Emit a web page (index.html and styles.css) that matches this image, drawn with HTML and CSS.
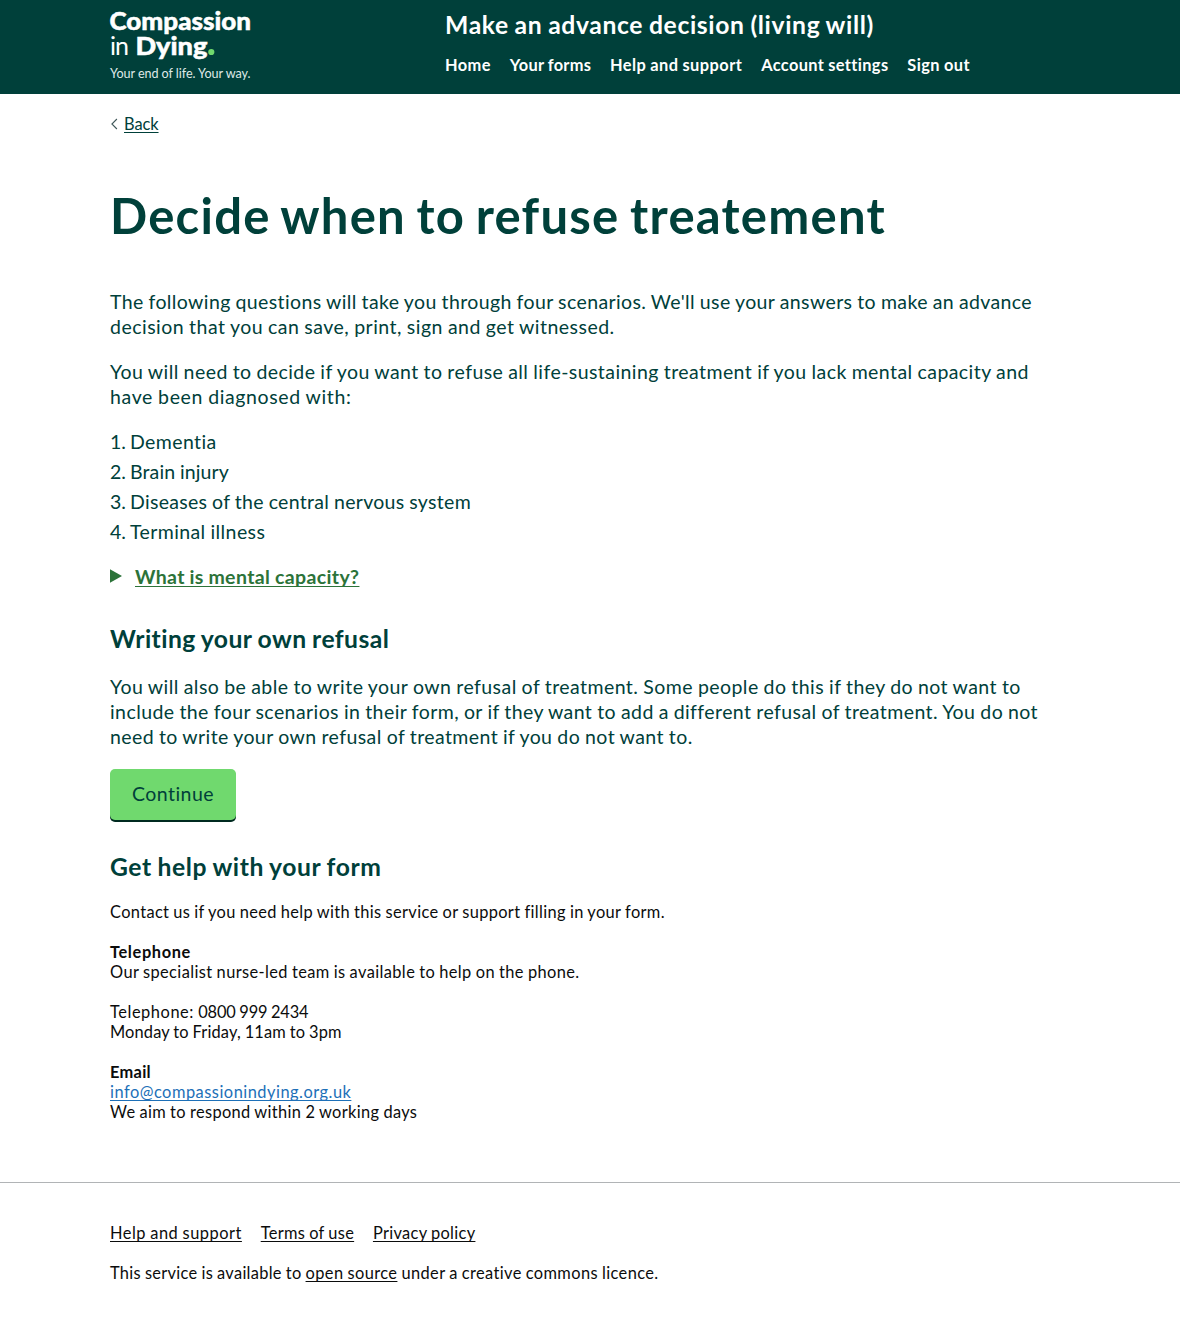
FILE: index.html
```html
<!DOCTYPE html>
<html lang="en">
<head>
<meta charset="utf-8">
<title>Decide when to refuse treatement</title>
<link rel="stylesheet" href="styles.css">
</head>
<body>
<header class="header">
  <div class="container header-inner">
    <a class="logo" href="#">
      <svg width="142" height="80" viewBox="0 0 142 80">
        <text class="logo-heavy" x="-0.5" y="29.5" textLength="141.5" lengthAdjust="spacingAndGlyphs">Compassion</text>
        <text class="logo-light" x="0" y="55" textLength="19">in</text>
        <text class="logo-heavy" x="25.5" y="55" textLength="72" lengthAdjust="spacingAndGlyphs">Dying</text>
        <circle class="logo-dot" cx="101.3" cy="52" r="3.1"/>
        <text class="logo-tag" x="0" y="77.5" textLength="140.5">Your end of life. Your way.</text>
      </svg>
    </a>
    <div class="header-content">
      <div class="service-name">Make an advance decision (living will)</div>
      <nav class="nav">
        <a class="w1" href="#">Home</a>
        <a class="w2" href="#">Your forms</a>
        <a class="w3" href="#">Help and support</a>
        <a class="w4" href="#">Account settings</a>
        <a class="w5" href="#">Sign out</a>
      </nav>
    </div>
  </div>
</header>
<div class="container">
  <div class="back">
    <svg width="8" height="12" viewBox="0 0 8 12"><path d="M6.9 1 1.9 6l5 5" fill="none" stroke="#40585a" stroke-width="1.1"/></svg>
    <a href="#">Back</a>
  </div>
  <main class="main">
    <h1>Decide when to refuse treatement</h1>
    <p><span class="l1">The following questions will take you through four scenarios. We'll use your answers to make an advance</span><br>
    <span class="l2">decision that you can save, print, sign and get witnessed.</span></p>
    <p><span class="l3">You will need to decide if you want to refuse all life-sustaining treatment if you lack mental capacity and</span><br>
    <span class="l4">have been diagnosed with:</span></p>
    <ol class="list">
      <li>Dementia</li>
      <li class="i2">Brain injury</li>
      <li class="i3">Diseases of the central nervous system</li>
      <li>Terminal illness</li>
    </ol>
    <details class="details">
      <summary>
        <svg width="12" height="14" viewBox="0 0 12 14"><path d="M0 0.3 12 7 0 13.7z" fill="#2c7339"/></svg>
        <span>What is mental capacity?</span>
      </summary>
      <p>Mental capacity is the ability to make a decision for yourself.</p>
    </details>
    <h2 class="h-writing">Writing your own refusal</h2>
    <p><span class="l5">You will also be able to write your own refusal of treatment. Some people do this if they do not want to</span><br>
    <span class="l6">include the four scenarios in their form, or if they want to add a different refusal of treatment. You do not</span><br>
    <span class="l7">need to write your own refusal of treatment if you do not want to.</span></p>
    <button class="button" type="button">Continue</button>
  </main>
  <section class="help">
    <h2>Get help with your form</h2>
    <p class="c1">Contact us if you need help with this service or support filling in your form.</p>
    <p><b>Telephone</b><br><span class="c2">Our specialist nurse-led team is available to help on the phone.</span></p>
    <p><span class="c3">Telephone: </span><span class="number">0800 999 2434</span><br><span class="c4">Monday to Friday, 11am to 3pm</span></p>
    <p><b class="c5">Email</b><br><a class="email" href="#">info@compassionindying.org.uk</a><br><span class="c1">We aim to respond within 2 working days</span></p>
  </section>
</div>
<footer class="footer">
  <div class="container">
    <div class="footer-links">
      <a class="f1" href="#">Help and support</a>
      <a href="#">Terms of use</a>
      <a href="#">Privacy policy</a>
    </div>
    <p><span class="f2">This service is available to </span><a class="f3" href="#">open source</a> under a creative commons licence.</p>
  </div>
</footer>
</body>
</html>
```
FILE: styles.css
```css
* { box-sizing: border-box; }

body {
  margin: 0;
  background: #fff;
  color: #0b0c0c;
  font-family: Lato, "Open Sans", sans-serif;
  font-size: 16.4px;
  line-height: 20px;
  word-spacing: -0.5px;
  font-variant-ligatures: none;
}

a {
  color: inherit;
  text-decoration-thickness: 1px;
  text-underline-offset: 2px;
  text-decoration-skip-ink: none;
}

p, h1, h2 { margin: 0; white-space: nowrap; }

.container { width: 960px; margin: 0 auto; }

.header { height: 94px; background: #00403a; color: #fff; }
.header-inner { display: flex; }
.logo { width: 335px; height: 80px; word-spacing: 0; }
.logo svg { display: block; overflow: visible; }
.logo text { fill: #fff; }
.logo .logo-heavy { font-size: 25.5px; font-weight: 900; stroke: #fff; stroke-width: 0.5px; }
.logo .logo-light { font-size: 25px; font-weight: 400; }
.logo .logo-tag { font-size: 12.6px; fill: #dfe9e7; }
.logo-dot { fill: #70d96e; }
.header-content { padding-top: 10px; }
.service-name { font-size: 24.7px; line-height: 30px; font-weight: 700; letter-spacing: 0.63px; word-spacing: -0.8px; }
.nav { display: flex; gap: 18.8px; margin-top: 15px; font-weight: 700; }
.nav a { text-decoration: none; white-space: nowrap; }
.w1 { letter-spacing: 0.4px; }
.w2 { letter-spacing: 0.27px; }
.w3 { letter-spacing: 0.46px; }
.w4 { letter-spacing: 0.37px; }
.w5 { letter-spacing: 0.44px; }

.back { display: flex; align-items: center; gap: 6px; padding-top: 20px; color: #00403a; }
.back a { letter-spacing: -0.06px; }

.main { padding-top: 56px; color: #00403a; font-size: 19.5px; line-height: 25px; }
h1 { font-size: 49px; line-height: 50px; letter-spacing: 1.25px; word-spacing: -2.6px; margin-bottom: 49px; }
.main p { margin-bottom: 20px; }
h2 { font-size: 24.7px; line-height: 30px; color: #00403a; word-spacing: -0.8px; }
.l1 { letter-spacing: 0.38px; }
.l2 { letter-spacing: 0.48px; }
.l3 { letter-spacing: 0.43px; }
.l4 { letter-spacing: 0.63px; }
.l5 { letter-spacing: 0.44px; }
.l6 { letter-spacing: 0.42px; }
.l7 { letter-spacing: 0.42px; }

.list { margin: 0 0 20px; padding-left: 20px; letter-spacing: 0.4px; }
.list li { margin-bottom: 5px; }
.list li:last-child { margin-bottom: 0; }
.list .i2 { letter-spacing: 0.14px; }
.list .i3 { letter-spacing: 0.3px; }
.list { list-style: none; counter-reset: item; }
.list li { display: flex; counter-increment: item; }
.list li::before { content: counter(item) "."; width: 20px; margin-left: -20px; letter-spacing: 0; }

.details { color: #2c7339; font-weight: 700; margin-bottom: 35px; }
.details summary { display: flex; gap: 13px; align-items: flex-start; list-style: none; }
.details svg { margin-top: 5px; }
.details span {
  letter-spacing: 0.38px;
  text-decoration: underline 1px;
  text-underline-offset: 2px;
  text-decoration-skip-ink: none;
}
.h-writing { letter-spacing: 0.43px; margin-bottom: 20px; }

.button {
  display: block;
  width: 126px;
  height: 51px;
  padding: 0 0 2px;
  border: 0;
  border-radius: 5px;
  background: #70d96e;
  box-shadow: 0 2px 0 #002a20;
  color: #00403a;
  font: 400 19.5px/25px Lato, sans-serif;
  font-variant-ligatures: none;
  letter-spacing: 0.45px;
}

.help { padding-top: 32px; }
.help h2 { letter-spacing: 0.58px; margin-bottom: 20px; }
.help p { margin-bottom: 20px; }
.help b { letter-spacing: 0.62px; }
.help b.c5 { letter-spacing: 0.29px; }
.help .c1 { letter-spacing: 0.35px; }
.c2 { letter-spacing: 0.39px; }
.c3 { letter-spacing: 0.56px; }
.number { letter-spacing: -0.14px; }
.c4 { letter-spacing: 0.15px; }
.email { color: #1d70b8; letter-spacing: 0.5px; }

.footer { margin-top: 60px; padding-top: 40px; border-top: 1px solid #b1b4b6; }
.footer-links { display: flex; gap: 18.8px; margin-bottom: 20px; letter-spacing: 0.31px; }
.footer p { letter-spacing: 0.38px; }
.footer .f1 { letter-spacing: 0.52px; }
.footer .f2 { letter-spacing: 0.3px; }
.footer .f3 { letter-spacing: 0.4px; }
```
